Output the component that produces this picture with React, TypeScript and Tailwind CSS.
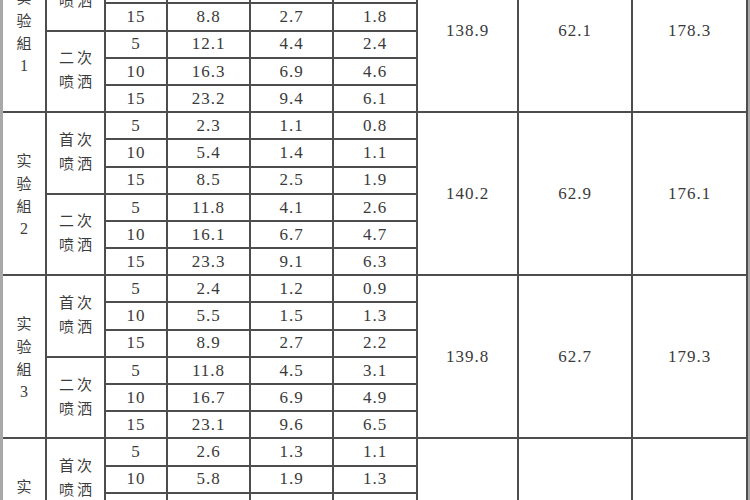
import React from 'react';

type Row = { t: string; a: string; b: string; c: string };
type Group = { label: string; first: Row[]; second: Row[]; total: [string, string, string] };

const groups: Group[] = [
  {
    label: '1',
    first: [
      { t: '5', a: '2.5', b: '1.2', c: '0.9' },
      { t: '10', a: '5.6', b: '1.5', c: '1.2' },
      { t: '15', a: '8.8', b: '2.7', c: '1.8' },
    ],
    second: [
      { t: '5', a: '12.1', b: '4.4', c: '2.4' },
      { t: '10', a: '16.3', b: '6.9', c: '4.6' },
      { t: '15', a: '23.2', b: '9.4', c: '6.1' },
    ],
    total: ['138.9', '62.1', '178.3'],
  },
  {
    label: '2',
    first: [
      { t: '5', a: '2.3', b: '1.1', c: '0.8' },
      { t: '10', a: '5.4', b: '1.4', c: '1.1' },
      { t: '15', a: '8.5', b: '2.5', c: '1.9' },
    ],
    second: [
      { t: '5', a: '11.8', b: '4.1', c: '2.6' },
      { t: '10', a: '16.1', b: '6.7', c: '4.7' },
      { t: '15', a: '23.3', b: '9.1', c: '6.3' },
    ],
    total: ['140.2', '62.9', '176.1'],
  },
  {
    label: '3',
    first: [
      { t: '5', a: '2.4', b: '1.2', c: '0.9' },
      { t: '10', a: '5.5', b: '1.5', c: '1.3' },
      { t: '15', a: '8.9', b: '2.7', c: '2.2' },
    ],
    second: [
      { t: '5', a: '11.8', b: '4.5', c: '3.1' },
      { t: '10', a: '16.7', b: '6.9', c: '4.9' },
      { t: '15', a: '23.1', b: '9.6', c: '6.5' },
    ],
    total: ['139.8', '62.7', '179.3'],
  },
  {
    label: '4',
    first: [
      { t: '5', a: '2.6', b: '1.3', c: '1.1' },
      { t: '10', a: '5.8', b: '1.9', c: '1.3' },
      { t: '15', a: '9.2', b: '2.9', c: '2.4' },
    ],
    second: [
      { t: '5', a: '12.3', b: '4.6', c: '3.2' },
      { t: '10', a: '16.9', b: '7.1', c: '5.0' },
      { t: '15', a: '23.6', b: '9.8', c: '6.7' },
    ],
    total: ['141.5', '63.2', '180.4'],
  },
];

const num = "font-['Liberation_Serif',serif] text-[17px] tracking-[1px] text-[#3a3a3a]";
const cjk = "font-['Noto_Sans_CJK_SC','Noto_Sans_CJK_JP',sans-serif] text-[15px] text-[#3d3d3d]";

function Cell({ w, children }: { w: string; children: React.ReactNode }) {
  return <div className={`${w} bg-white flex items-center justify-center ${num}`}>{children}</div>;
}

function SubGroup({ name, rows }: { name: string; rows: Row[] }) {
  return (
    <div className="flex gap-[2px]">
      <div className={`w-[57px] bg-white flex flex-col items-center justify-center leading-[24px] tracking-[3px] pl-[3px] pb-[4px] ${cjk}`}>
        <span>{name}</span>
        <span>喷洒</span>
      </div>
      <div className="flex flex-col gap-[2px]">
        {rows.map((r, i) => (
          <div key={i} className="flex gap-[2px] h-[25.2px]">
            <Cell w="w-[60px]">{r.t}</Cell>
            <Cell w="w-[81px]">{r.a}</Cell>
            <Cell w="w-[81px]">{r.b}</Cell>
            <Cell w="w-[82px]">{r.c}</Cell>
          </div>
        ))}
      </div>
    </div>
  );
}

export default function App() {
  return (
    <div className="w-[750px] h-[500px] overflow-hidden bg-[#a8a8a8]">
      <div className="ml-[3px] -mt-[50px] w-[745px] pr-[2px] bg-[#4d4d4d] flex flex-col gap-[2px]">
        {groups.map((g) => (
          <div key={g.label} className="flex gap-[2px]">
            <div className={`w-[42px] bg-white flex flex-col items-center justify-center leading-[23px] ${cjk}`}>
              <span>实</span>
              <span>验</span>
              <span>組</span>
              <span className="font-['Liberation_Serif',serif] text-[16px]">{g.label}</span>
            </div>
            <div className="flex flex-col gap-[2px]">
              <SubGroup name="首次" rows={g.first} />
              <SubGroup name="二次" rows={g.second} />
            </div>
            <Cell w="w-[99px]">{g.total[0]}</Cell>
            <Cell w="w-[112px]">{g.total[1]}</Cell>
            <Cell w="w-[113px]">{g.total[2]}</Cell>
          </div>
        ))}
      </div>
    </div>
  );
}
